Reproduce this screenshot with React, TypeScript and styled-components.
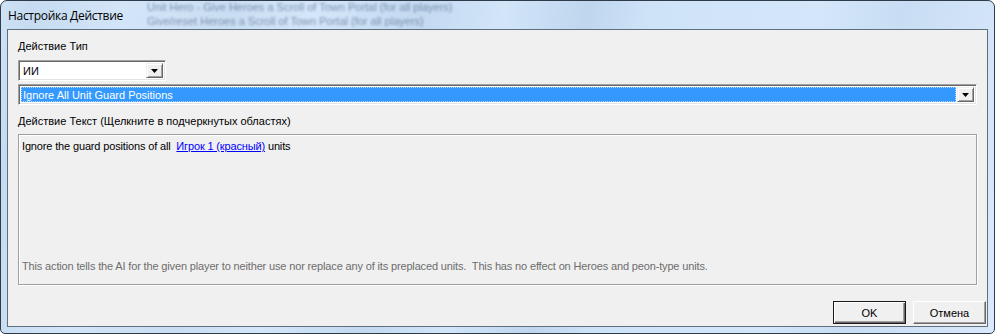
import React from 'react';
import styled, { createGlobalStyle } from 'styled-components';

const GlobalStyle = createGlobalStyle`
  html, body {
    margin: 0;
    padding: 0;
    background: #ffffff;
  }
  * {
    box-sizing: border-box;
  }
`;

const Window = styled.div`
  position: relative;
  width: 995px;
  height: 334px;
  display: flex;
  flex-direction: column;
  padding: 0 6px 6px 6px;
  border: 1px solid #2e3b4a;
  border-radius: 7px 7px 5px 5px;
  overflow: hidden;
  background: linear-gradient(
    100deg,
    #cfe2f6 0%,
    #c6dbf1 3%,
    #d3e5f8 12%,
    #c9ddf2 22%,
    #d4e6f9 30%,
    #c3d9f0 40%,
    #d2e5f9 48%,
    #bfd6ee 56%,
    #cfe3f8 62%,
    #d3e6fa 78%,
    #c8ddf3 86%,
    #dae9fb 100%
  );
`;

const TitleBar = styled.div`
  position: relative;
  height: 28px;
  display: flex;
  align-items: center;
  padding-left: 1px;
  flex-shrink: 0;
`;

const Title = styled.span`
  position: relative;
  font-family: 'Open Sans', 'Noto Sans', sans-serif;
  font-size: 12px;
  letter-spacing: -0.3px;
  color: #000000;
  z-index: 1;
`;

// blurred window behind the glass title bar
const GhostText = styled.div<{ $top: number; $left: number }>`
  position: absolute;
  top: ${(p) => p.$top}px;
  left: ${(p) => p.$left}px;
  font-family: 'Liberation Sans', sans-serif;
  font-size: 11px;
  line-height: 12px;
  color: rgba(45, 70, 110, 0.5);
  filter: blur(1.3px);
  white-space: nowrap;
`;

const Client = styled.div`
  flex: 1;
  display: flex;
  flex-direction: column;
  padding: 10px 1px 2px 10px;
  background: #f0f0f0;
  border: 1px solid #5f6f82;
  font-family: 'Liberation Sans', Arial, sans-serif;
  font-size: 11px;
  color: #000000;
`;

const Body = styled.div`
  display: flex;
  flex-direction: column;
  margin-right: 9px;
`;

const Label = styled.div<{ $gap: number }>`
  height: 13px;
  line-height: 13px;
  margin-bottom: ${(p) => p.$gap}px;
`;

const Combo = styled.div<{ $width?: number; $gap?: number }>`
  display: flex;
  width: ${(p) => (p.$width ? `${p.$width}px` : '100%')};
  height: 21px;
  margin-bottom: ${(p) => p.$gap ?? 0}px;
  padding: 2px;
  background: #ffffff;
  border-top: 1px solid #a0a0a0;
  border-left: 1px solid #a0a0a0;
  border-bottom: 1px solid #ffffff;
  border-right: 1px solid #ffffff;
  box-shadow: inset 1px 1px 0 #696969, inset -1px -1px 0 #e3e3e3;
`;

const ComboValue = styled.div<{ $selected?: boolean }>`
  flex: 1;
  display: flex;
  align-items: center;
  padding-left: 2px;
  margin-right: 1px;
  background: ${(p) => (p.$selected ? '#3399ff' : 'transparent')};
  color: ${(p) => (p.$selected ? '#ffffff' : '#000000')};
  outline: ${(p) => (p.$selected ? '1px dotted rgba(255,255,255,0.6)' : 'none')};
  outline-offset: -1px;
  white-space: nowrap;
`;

const DropButton = styled.div`
  width: 17px;
  display: flex;
  align-items: center;
  justify-content: center;
  background: #f0f0f0;
  border-top: 1px solid #f0f0f0;
  border-left: 1px solid #f0f0f0;
  border-bottom: 1px solid #696969;
  border-right: 1px solid #696969;
  box-shadow: inset 1px 1px 0 #ffffff, inset -1px -1px 0 #a0a0a0;
`;

const TextBox = styled.div`
  height: 151px;
  display: flex;
  flex-direction: column;
  justify-content: space-between;
  padding: 5px 3px 11px 3px;
  border: 1px solid #a0a0a0;
  box-shadow: 1px 1px 0 #ffffff, inset 1px 1px 0 #ffffff;
`;

const Line = styled.div`
  height: 13px;
  line-height: 13px;
  letter-spacing: -0.15px;
  white-space: pre;
`;

const Link = styled.span`
  color: #0000ff;
  text-decoration: underline;
`;

const Hint = styled(Line)`
  color: #6d6d6d;
`;

const ButtonRow = styled.div`
  display: flex;
  justify-content: flex-end;
  gap: 7px;
  margin-top: 16px;
`;

const Button = styled.button<{ $default?: boolean }>`
  width: 73px;
  height: 23px;
  padding: 0;
  font-family: 'Liberation Sans', Arial, sans-serif;
  font-size: 11px;
  color: #000000;
  background: #f0f0f0;
  border: 1px solid;
  border-color: ${(p) =>
    p.$default ? '#1a1a1a' : '#ffffff #696969 #696969 #ffffff'};
  box-shadow: ${(p) =>
    p.$default
      ? 'inset 1px 1px 0 #ffffff, inset -1px -1px 0 #696969, inset -2px -2px 0 #a0a0a0'
      : 'inset -1px -1px 0 #a0a0a0'};
`;

function Arrow(): JSX.Element {
  return (
    <svg width="7" height="4" viewBox="0 0 7 4">
      <path d="M0 0H7L3.5 4Z" fill="#000" />
    </svg>
  );
}

export default function App(): JSX.Element {
  return (
    <>
      <GlobalStyle />
      <Window>
        <TitleBar>
          <GhostText $top={0} $left={140}>
            Unit Hero - Give Heroes a Scroll of Town Portal (for all players)
          </GhostText>
          <GhostText $top={14} $left={140}>
            Give/reset Heroes a Scroll of Town Portal (for all players)
          </GhostText>
          <Title>Настройка Действие</Title>
        </TitleBar>
        <Client>
          <Body>
            <Label $gap={7}>Действие Тип</Label>
            <Combo $width={148} $gap={3}>
              <ComboValue>ИИ</ComboValue>
              <DropButton>
                <Arrow />
              </DropButton>
            </Combo>
            <Combo $gap={10}>
              <ComboValue $selected>Ignore All Unit Guard Positions</ComboValue>
              <DropButton>
                <Arrow />
              </DropButton>
            </Combo>
            <Label $gap={6}>Действие Текст (Щелкните в подчеркнутых областях)</Label>
            <TextBox>
              <Line>
                {'Ignore the guard positions of all  '}
                <Link>Игрок 1 (красный)</Link>
                {' units'}
              </Line>
              <Hint>
                This action tells the AI for the given player to neither use nor replace any of its
                preplaced units.  This has no effect on Heroes and peon-type units.
              </Hint>
            </TextBox>
          </Body>
          <ButtonRow>
            <Button $default>OK</Button>
            <Button>Отмена</Button>
          </ButtonRow>
        </Client>
      </Window>
    </>
  );
}
